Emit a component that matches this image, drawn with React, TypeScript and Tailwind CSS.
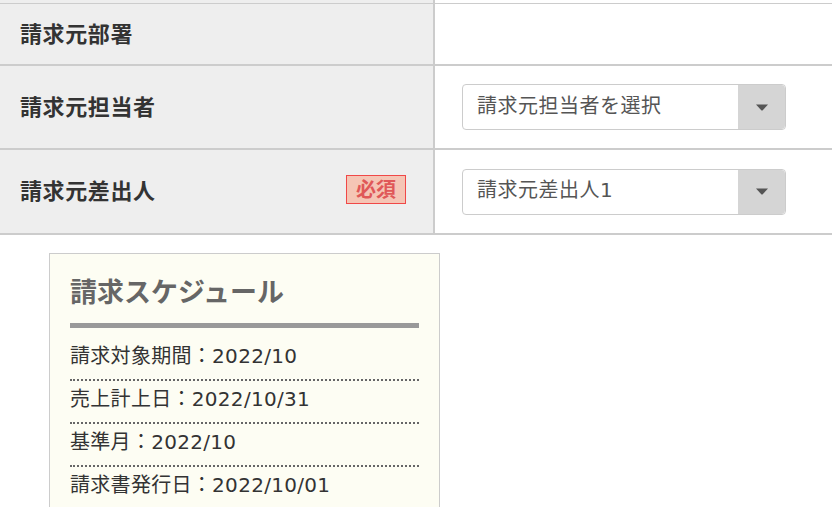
const font = "font-['DejaVu_Sans','Noto_Sans_CJK_JP',sans-serif]";
const cjk = "font-['Noto_Sans_CJK_JP',sans-serif]";

function SelectBox({ value }: { value: string }) {
  return (
    <div className="flex h-[46px] w-[324px] rounded-[4px] border border-[#cccccc] bg-white">
      <div className="flex flex-1 items-center pb-[3px] pl-[14px] text-[20px] leading-none tracking-[0.5px] text-[#555555]">
        {value}
      </div>
      <div className="flex w-[47px] items-center justify-center rounded-r-[4px] bg-[#d5d5d5]">
        <svg width="12" height="7" viewBox="0 0 12 7">
          <path d="M0 0.5 H12 L6.5 6.5 H5.5 Z" fill="#555555" />
        </svg>
      </div>
    </div>
  );
}

function Row({
  label,
  height,
  required,
  children,
}: {
  label: string;
  height: string;
  required?: boolean;
  children?: React.ReactNode;
}) {
  return (
    <div className={`flex border-b-2 border-[#cccccc] ${height}`}>
      <div className="flex w-[435px] shrink-0 items-center border-r-2 border-[#cccccc] bg-[#eeeeee] pb-[5px] pl-5 pr-[27px]">
        <span className={`text-[22px] font-bold leading-none tracking-[0.6px] text-[#333333] ${cjk}`}>
          {label}
        </span>
        {required && (
          <span
            className={`ml-auto flex h-[29px] w-[60px] items-center justify-center border border-[#f04848] bg-[#f5c5b5] text-[20px] font-bold leading-none text-[#e05858] ${cjk}`}
          >
            必須
          </span>
        )}
      </div>
      <div className="flex flex-1 items-center pl-[27px]">{children}</div>
    </div>
  );
}

export default function App() {
  const schedule = [
    "請求対象期間：2022/10",
    "売上計上日：2022/10/31",
    "基準月：2022/10",
    "請求書発行日：2022/10/01",
  ];

  return (
    <div className={`h-[507px] w-[832px] overflow-hidden bg-white ${font}`}>
      <div className="flex h-[3px]">
        <div className="w-[433px] bg-[#eeeeee]" />
        <div className="w-[2px] bg-[#cccccc]" />
      </div>
      <div className="h-px bg-[#cccccc]" />
      <Row label="請求元部署" height="h-[62px]" />
      <Row label="請求元担当者" height="h-[84px]">
        <SelectBox value="請求元担当者を選択" />
      </Row>
      <Row label="請求元差出人" height="h-[85px]" required>
        <SelectBox value="請求元差出人1" />
      </Row>

      <div className="ml-[49px] mt-[18px] w-[391px] border border-[#cccccc] bg-[#fdfdf3] px-5 pb-6">
        <h2 className={`pt-[23px] text-[27px] font-bold leading-[27px] text-[#666666] ${cjk}`}>
          請求スケジュール
        </h2>
        <div className="mt-[19px] h-[5px] bg-[#999999]" />
        <ul className="mt-[10px]">
          {schedule.map((item) => (
            <li
              key={item}
              className="flex h-[43px] items-center border-b-2 border-dotted border-[#666666] pb-[6px] text-[20px] leading-none tracking-[0.3px] text-[#333333]"
            >
              {item}
            </li>
          ))}
        </ul>
      </div>
    </div>
  );
}
